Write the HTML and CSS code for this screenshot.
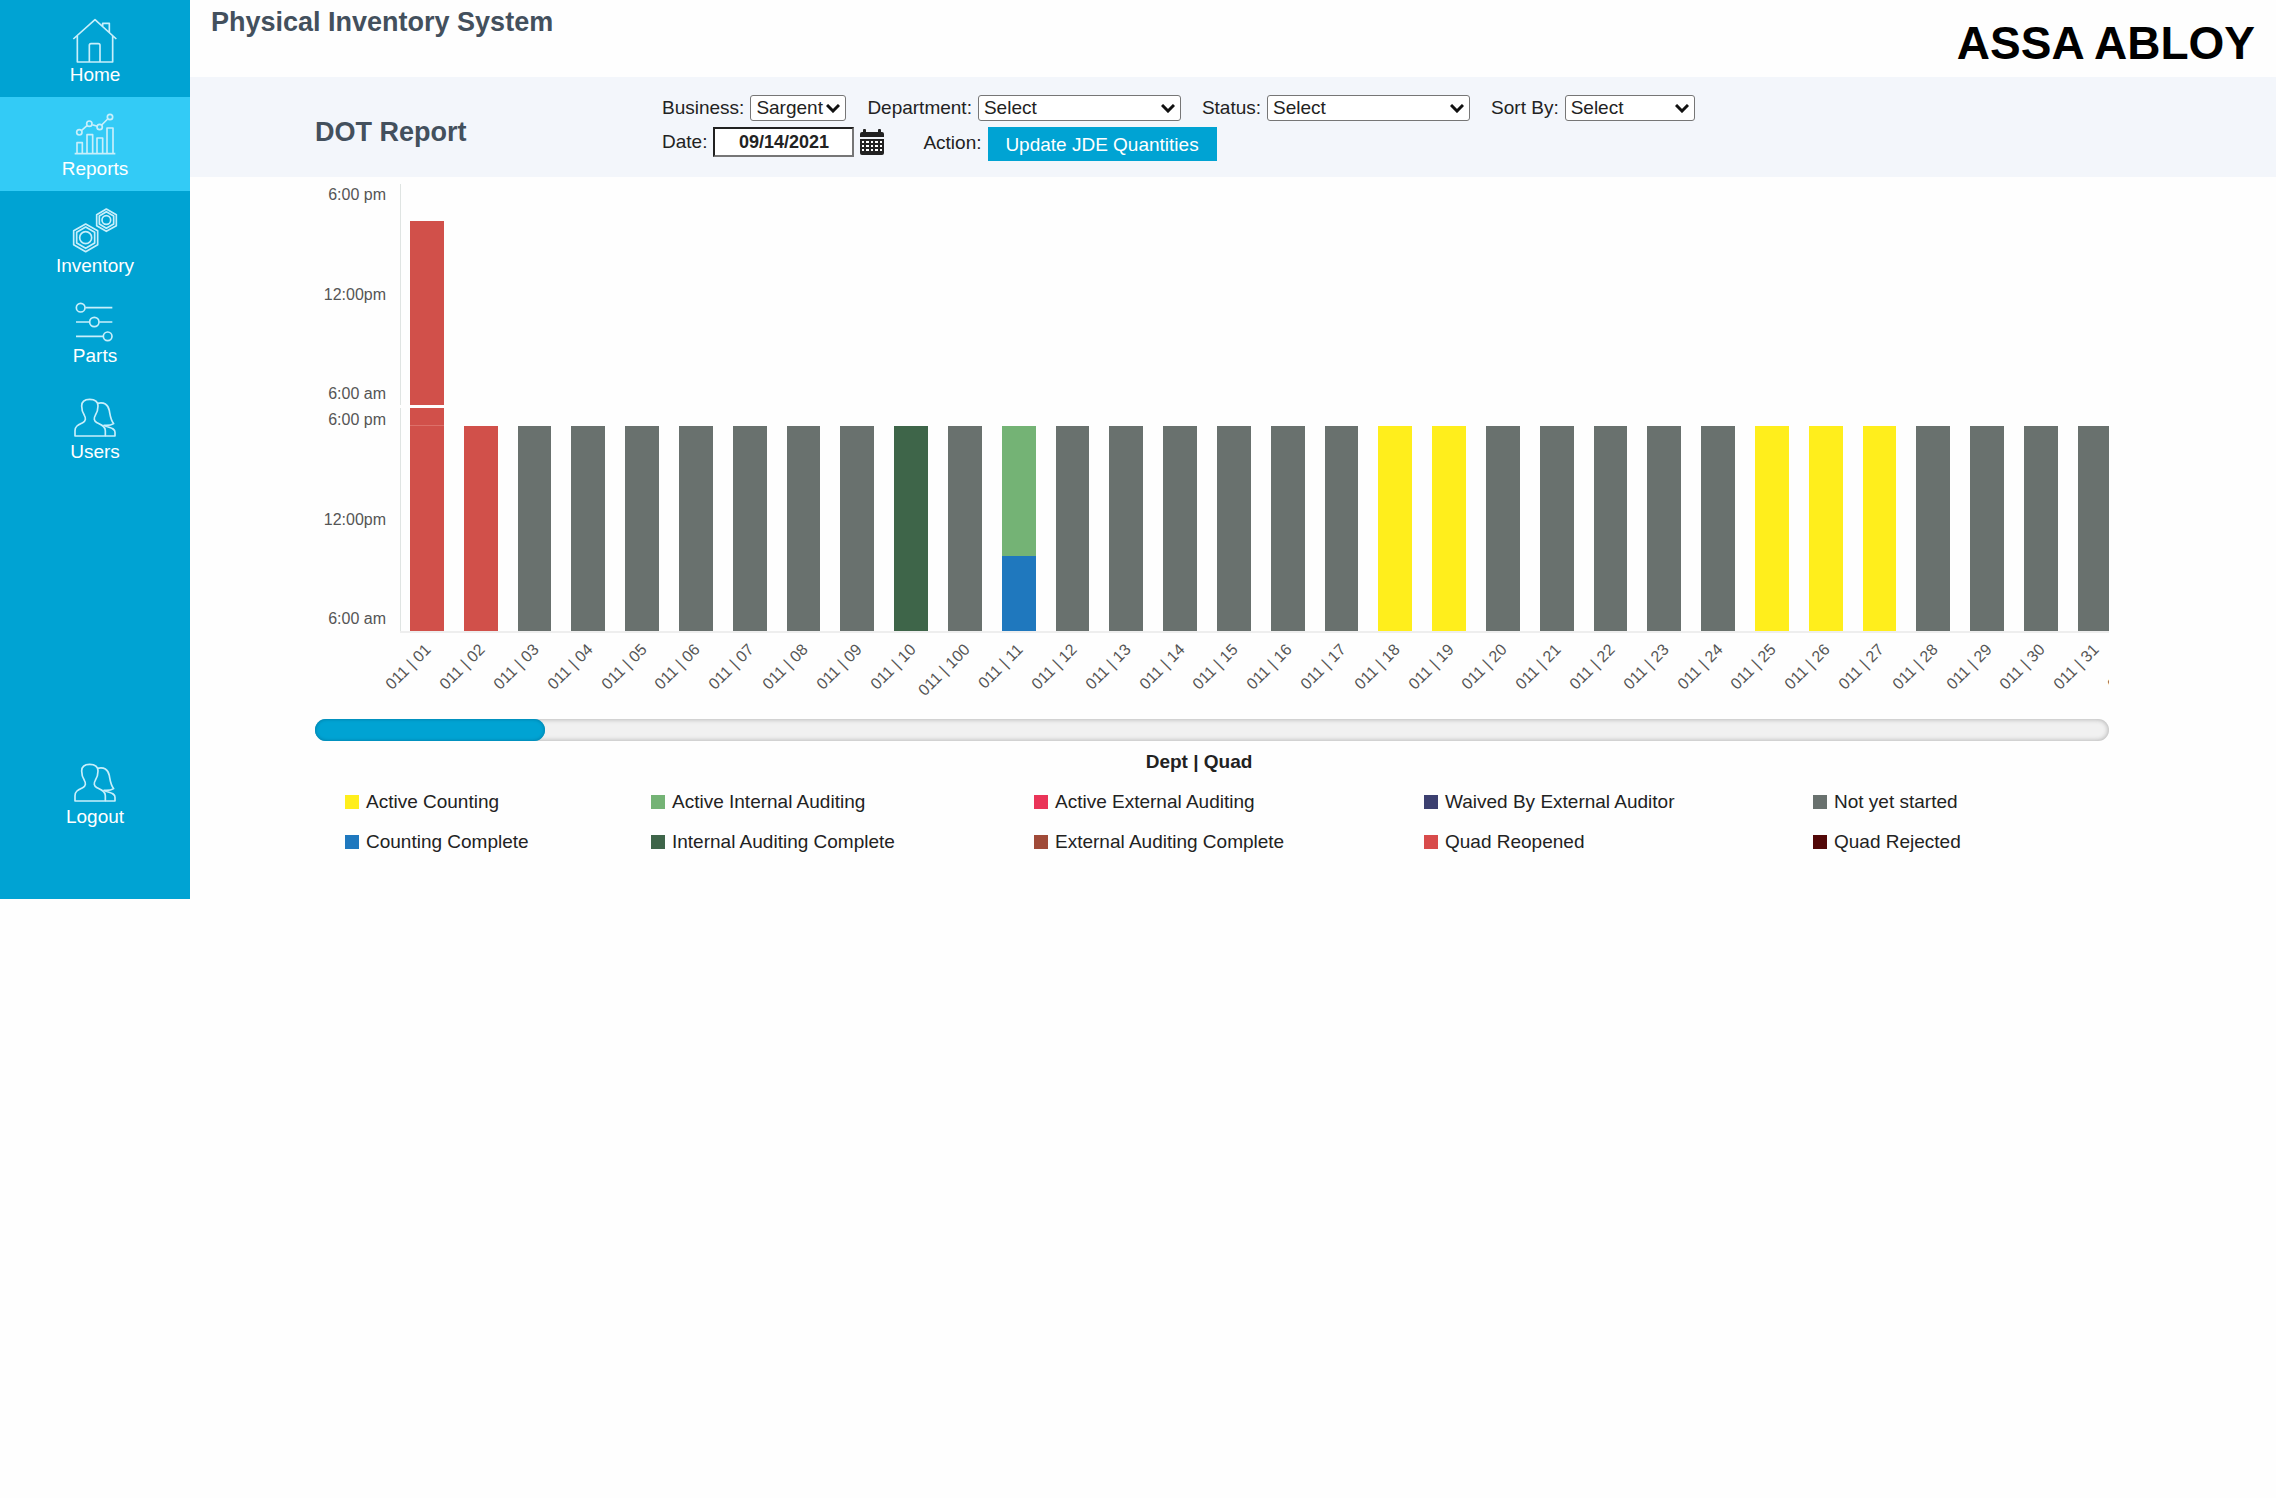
FILE: index.html
```html
<!DOCTYPE html>
<html lang="en">
<head>
<meta charset="utf-8">
<title>Physical Inventory System</title>
<link rel="stylesheet" href="styles.css">
</head>
<body>
<svg class="defs" aria-hidden="true">
  <symbol id="people" viewBox="210 615 150 129" overflow="visible">
    <path d="M225 738V722C225 708 236 704 248 698C258 693 258 684 253 676C247 667 245 658 245 648C245 635 254 628 269 628C284 628 294 635 294 648C294 658 292 667 286 676C281 684 281 693 291 698C303 704 316 708 316 722V738Z"/>
    <path d="M292 640C312 635 324 643 328 662C331 678 332 690 341 701C333 706 323 707 312 706C326 714 345 712 345 727V738H316"/>
  </symbol>
</svg>
<div class="app">
  <nav class="sidebar">
    <a class="nav-item" href="#home">
      <svg class="icon" width="50" height="43" viewBox="210 54 150 129"><path d="M220 117L285 59L349 117M308 78V70H328V97M232 108V186H338V108M268 186V136Q268 131 273 131H295Q300 131 300 136V186"/></svg>
      <span>Home</span>
    </a>
    <a class="nav-item active" href="#reports" aria-current="page">
      <svg class="icon" width="50" height="41" viewBox="210 342 150 123"><path d="M224 461H346M231 461V428H247V461M261 461V404H278V461M291 461V414H308V461M321 461V384H339V461M245 391L261 377M277 374L292 379M305 375L323 357"/><circle cx="238" cy="397" r="8"/><circle cx="268" cy="371" r="8"/><circle cx="299" cy="381" r="8"/><circle cx="330" cy="351" r="8"/></svg>
      <span>Reports</span>
    </a>
    <a class="nav-item" href="#inventory">
      <svg class="icon" width="50" height="44" viewBox="210 54 150 132"><path d="M257 102L293 122V164L257 185L221 164V122ZM257 111L284 127V159L257 175L230 159V127ZM319 57L349 74V107L319 124L290 107V74ZM319 65L341 78V102L319 115L298 102V78Z"/><circle cx="257" cy="143" r="18"/><circle cx="319" cy="90" r="13"/></svg>
      <span>Inventory</span>
    </a>
    <a class="nav-item" href="#parts">
      <svg class="icon" width="50" height="37" viewBox="210 345 150 111"><path d="M256 353H337M228 396H268M298 396H337M228 439H309"/><circle cx="242" cy="353" r="13"/><circle cx="283" cy="396" r="14"/><circle cx="323" cy="439" r="13"/></svg>
      <span>Parts</span>
    </a>
    <a class="nav-item" href="#users">
      <svg class="icon" width="50" height="43"><use href="#people"/></svg>
      <span>Users</span>
    </a>
    <a class="nav-item logout" href="#logout">
      <svg class="icon" width="50" height="43"><use href="#people"/></svg>
      <span>Logout</span>
    </a>
  </nav>

  <main class="main">
    <header class="header">
      <h1>Physical Inventory System</h1>
      <div class="logo">ASSA ABLOY</div>
    </header>

    <section class="toolbar">
      <h2>DOT Report</h2>
      <form class="filters">
        <div class="filter-row">
          <div class="field"><label for="business">Business:</label><select id="business" class="short"><option>Sargent</option></select></div>
          <div class="field"><label for="department">Department:</label><select id="department" class="long"><option>Select</option></select></div>
          <div class="field"><label for="status">Status:</label><select id="status" class="long"><option>Select</option></select></div>
          <div class="field"><label for="sort">Sort By:</label><select id="sort" class="medium"><option>Select</option></select></div>
        </div>
        <div class="filter-row second">
          <div class="field">
            <label for="date">Date:</label><input id="date" type="text" value="09/14/2021">
            <button class="calendar" type="button" aria-label="Choose date">
              <svg width="24" height="26" viewBox="0 0 24 26"><path fill="#222" d="M0 5Q0 3 2 3H3V1Q3 0 4 0H5Q6 0 6 1V3H18V1Q18 0 19 0H20Q21 0 21 1V3H22Q24 3 24 5V8H0ZM0 10H24V24Q24 26 22 26H2Q0 26 0 24Z"/><path fill="#fff" d="M2 12h2v2H2zm4 0h3v2H6zm5 0h2v2h-2zm4 0h3v2h-3zm5 0h2v2h-2zM2 16h2v2H2zm4 0h3v2H6zm5 0h2v2h-2zm4 0h3v2h-3zm5 0h2v2h-2zM2 20h2v2H2zm4 0h3v2H6zm5 0h2v2h-2zm4 0h3v2h-3zm5 0h2v2h-2z"/></svg>
            </button>
          </div>
          <div class="field action"><span>Action:</span><button class="primary" type="button">Update JDE Quantities</button></div>
        </div>
      </form>
    </section>

    <section class="report">
      <div class="chart">
        <div class="axis"><span>6:00 pm</span><span>12:00pm</span><span>6:00 am</span></div>
        <div class="plot upper"><div class="bar reopened"></div></div>
        <div class="axis lower-axis"><span>6:00 pm</span><span>12:00pm</span><span>6:00 am</span></div>
        <div class="plot lower">
          <div class="bar reopened full"></div>
          <div class="bar reopened"></div>
          <div class="bar idle"></div>
          <div class="bar idle"></div>
          <div class="bar idle"></div>
          <div class="bar idle"></div>
          <div class="bar idle"></div>
          <div class="bar idle"></div>
          <div class="bar idle"></div>
          <div class="bar internal-done"></div>
          <div class="bar idle"></div>
          <div class="bar split"></div>
          <div class="bar idle"></div>
          <div class="bar idle"></div>
          <div class="bar idle"></div>
          <div class="bar idle"></div>
          <div class="bar idle"></div>
          <div class="bar idle"></div>
          <div class="bar counting"></div>
          <div class="bar counting"></div>
          <div class="bar idle"></div>
          <div class="bar idle"></div>
          <div class="bar idle"></div>
          <div class="bar idle"></div>
          <div class="bar idle"></div>
          <div class="bar counting"></div>
          <div class="bar counting"></div>
          <div class="bar counting"></div>
          <div class="bar idle"></div>
          <div class="bar idle"></div>
          <div class="bar idle"></div>
          <div class="bar idle"></div>
          <div class="bar idle"></div>
        </div>
        <div class="ticks">
          <div><span>011 | 01</span></div>
          <div><span>011 | 02</span></div>
          <div><span>011 | 03</span></div>
          <div><span>011 | 04</span></div>
          <div><span>011 | 05</span></div>
          <div><span>011 | 06</span></div>
          <div><span>011 | 07</span></div>
          <div><span>011 | 08</span></div>
          <div><span>011 | 09</span></div>
          <div><span>011 | 10</span></div>
          <div><span>011 | 100</span></div>
          <div><span>011 | 11</span></div>
          <div><span>011 | 12</span></div>
          <div><span>011 | 13</span></div>
          <div><span>011 | 14</span></div>
          <div><span>011 | 15</span></div>
          <div><span>011 | 16</span></div>
          <div><span>011 | 17</span></div>
          <div><span>011 | 18</span></div>
          <div><span>011 | 19</span></div>
          <div><span>011 | 20</span></div>
          <div><span>011 | 21</span></div>
          <div><span>011 | 22</span></div>
          <div><span>011 | 23</span></div>
          <div><span>011 | 24</span></div>
          <div><span>011 | 25</span></div>
          <div><span>011 | 26</span></div>
          <div><span>011 | 27</span></div>
          <div><span>011 | 28</span></div>
          <div><span>011 | 29</span></div>
          <div><span>011 | 30</span></div>
          <div><span>011 | 31</span></div>
          <div><span>011 | 32</span></div>
        </div>
      </div>
      <input class="scroller" type="range" min="0" max="100" value="0" aria-label="Scroll chart">
      <h3>Dept | Quad</h3>
      <ul class="legend">
        <li class="counting">Active Counting</li>
        <li class="internal">Active Internal Auditing</li>
        <li class="external">Active External Auditing</li>
        <li class="waived">Waived By External Auditor</li>
        <li class="idle">Not yet started</li>
        <li class="counted">Counting Complete</li>
        <li class="internal-done">Internal Auditing Complete</li>
        <li class="external-done">External Auditing Complete</li>
        <li class="reopened">Quad Reopened</li>
        <li class="rejected">Quad Rejected</li>
      </ul>
    </section>
  </main>
</div>
</body>
</html>
```
FILE: styles.css
```css
* { box-sizing: border-box; }

body {
  margin: 0;
  background: #fefefe;
  color: #222;
  font: 19px/22px "Liberation Sans", Arial, sans-serif;
}

h1, h2, h3, ul { margin: 0; padding: 0; }

h1, h2 {
  color: #43505d;
  font-size: 27px;
  line-height: 32px;
}

button, input, select {
  color: inherit;
  font: inherit;
}

.defs {
  position: absolute;
  width: 0;
  height: 0;
}

.app {
  display: flex;
  align-items: stretch;
}

/* Sidebar */
.sidebar {
  display: flex;
  flex-direction: column;
  flex: 0 0 190px;
  padding: 1px 0 60px;
  background: #00a3d3;
}

.nav-item {
  display: flex;
  flex-direction: column;
  align-items: center;
  gap: 3px;
  padding: 17px 0 11px;
  color: #fff;
  text-decoration: none;
}

.nav-item.active { background: #33cbf6; }

.logout { margin-top: auto; }

.icon {
  overflow: visible;
  fill: none;
  stroke: #c8effb;
  stroke-width: 5;
  stroke-linejoin: round;
}

/* Header and filters */
.main {
  flex: 1;
  min-width: 0;
  padding-bottom: 46px;
}

.header {
  display: flex;
  justify-content: space-between;
  height: 77px;
  padding: 6px 21px 0;
}

.logo {
  color: #000;
  font-size: 46px;
  font-weight: bold;
  line-height: 74px;
}

.toolbar {
  display: flex;
  align-items: center;
  padding: 18px 0 16px 125px;
  background: #f3f6fb;
}

.toolbar h2 {
  flex: 0 0 347px;
  padding-top: 8px;
}

.filters {
  display: flex;
  flex-direction: column;
  gap: 6px;
}

.filter-row {
  display: flex;
  gap: 21px;
}

.second {
  gap: 39px;
  align-items: flex-start;
}

.field {
  display: flex;
  align-items: center;
  gap: 6px;
}

select {
  height: 26px;
  padding: 0 20px 0 5px;
  border: 1px solid #767676;
  border-radius: 3px;
  appearance: none;
  background: #fff url("data:image/svg+xml,%3Csvg xmlns='http://www.w3.org/2000/svg' width='14' height='9'%3E%3Cpath d='M1 1l6 6 6-6' fill='none' stroke='%23111' stroke-width='3'/%3E%3C/svg%3E") no-repeat right 5px center;
}

.short { width: 96px; }
.medium { width: 130px; }
.long { width: 203px; }

input[type="text"] {
  width: 141px;
  height: 30px;
  padding: 0;
  border: 2px inset #767676;
  border-radius: 0;
  background: #fff;
  font-size: 18px;
  font-weight: bold;
  text-align: center;
}

.calendar {
  display: flex;
  padding: 0;
  border: 0;
  background: none;
}

.action { align-items: flex-start; line-height: 32px; }

.primary {
  width: 229px;
  height: 34px;
  padding: 2px 0 0;
  border: 0;
  background: #00a3d3;
  color: #fff;
}

/* Chart */
.report { padding: 7px 167px 0 125px; }

.chart {
  display: grid;
  grid-template-columns: 71px 1fr;
  grid-template-rows: 221px 223px 77px;
  row-gap: 3px;
  column-gap: 14px;
  overflow: hidden;
  color: #555;
  font-size: 16px;
  line-height: 20px;
}

.axis {
  display: flex;
  flex-direction: column;
  justify-content: space-between;
  padding: 1px 0;
  text-align: right;
}

.lower-axis { padding: 2px 0; }

.plot {
  display: flex;
  align-items: flex-end;
  min-width: 0;
  border-left: 1px solid #dfe4e2;
}

.bar {
  flex: 0 0 3.15%;
  height: 205px;
  border-left: 9px solid transparent;
  border-right: 11px solid transparent;
  background-clip: padding-box;
}

.upper .bar { height: 184px; }
.lower { box-shadow: 0 2px #eee; }
.bar.full {
  height: 223px;
  background-image: linear-gradient(transparent 17px, #dd7069 17px, #dd7069 18px, transparent 18px);
}

.ticks {
  display: flex;
  grid-column: 2;
  min-width: 0;
  padding: 3px 0 0 1px;
}

.ticks div {
  display: flex;
  flex: 0 0 3.15%;
  justify-content: flex-end;
  min-width: 0;
  padding-right: 26px;
  white-space: nowrap;
}

.ticks span {
  flex-shrink: 0;
  height: 20px;
  transform: rotate(-45deg);
  transform-origin: right center;
}

.reopened { background-color: #d1504a; }
.idle { background-color: #69716e; }
.counting { background-color: #ffee1c; }
.internal-done { background-color: #3e6549; }
.split { background-image: linear-gradient(#74b375 130px, #1f78be 130px); }

/* Scroller */
.scroller {
  display: block;
  width: 100%;
  height: 22px;
  margin: 8px 0 0;
  border-radius: 11px;
  appearance: none;
  background: #f1f1f1;
  box-shadow: inset 0 0 4px 1px #bbb;
}

.scroller::-webkit-slider-thumb {
  width: 230px;
  height: 22px;
  border-radius: 11px;
  appearance: none;
  background: #00a3d3;
  box-shadow: inset 0 0 3px 1px #0288b3;
}

/* Legend */
h3 {
  padding: 10px 26px 0 0;
  font-size: 19px;
  line-height: 22px;
  text-align: center;
}

.legend {
  display: grid;
  grid-template-columns: 306fr 383fr 390fr 389fr 296fr;
  row-gap: 18px;
  padding: 18px 0 0 30px;
  list-style: none;
}

.legend li {
  padding-left: 21px;
  background: none;
}

.legend li::before {
  content: "";
  float: left;
  width: 14px;
  height: 14px;
  margin: 4px 0 0 -21px;
}

.legend .counting::before { background: #ffee1c; }
.legend .counted::before { background: #1f78be; }
.legend .internal::before { background: #74b375; }
.legend .internal-done::before { background: #3e6549; }
.legend .external::before { background: #ea3458; }
.legend .external-done::before { background: #a04a38; }
.legend .waived::before { background: #3c4070; }
.legend .idle::before { background: #69716e; }
.legend .reopened::before { background: #d84b4b; }
.legend .rejected::before { background: #520808; }
```
